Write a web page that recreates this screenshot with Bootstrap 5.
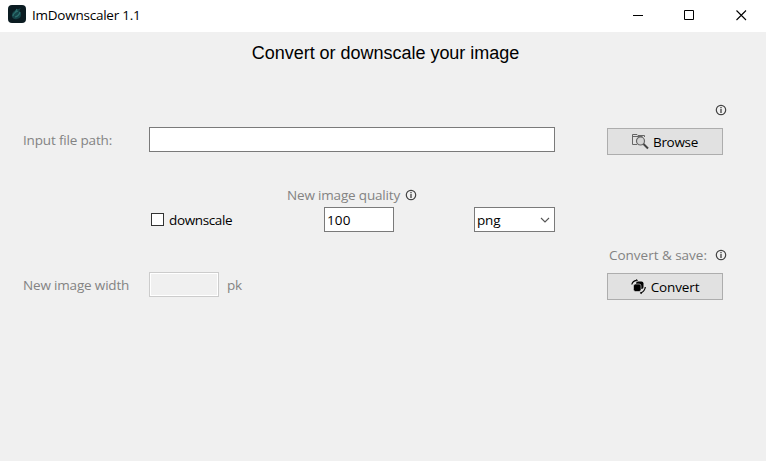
<!DOCTYPE html>
<html lang="en">
<head>
<meta charset="utf-8">
<title>ImDownscaler 1.1</title>
<meta name="viewport" content="width=device-width, initial-scale=1">
<link href="https://cdn.jsdelivr.net/npm/bootstrap@5.3.0/dist/css/bootstrap.min.css" rel="stylesheet">
<style>
body{background:#f0f0f0;color:#000;font:13.5px/20px "Open Sans","Noto Sans",sans-serif;letter-spacing:-.17px;height:461px;overflow:hidden}
.titlebar{height:32px;padding-left:8px}
.app-icon{margin-top:-4px}
.app-name{margin:-2px 0 0 6px;letter-spacing:-.24px}
.win-btn{width:51.5px;height:30px}
.win-group{margin-right:-1px}
.heading{font:18px/22px "Liberation Sans",Arial,sans-serif;letter-spacing:-.02px;margin:10px 0 0 5px}
.form-area{display:grid;grid-template-columns:126px 138px 187px 133px 120px;grid-template-rows:20px 7px 28px 30px 20px 2px 25px 13px 20px 7px 28px;padding:36px 0 0 23px}
.r1{grid-row:1}.r3{grid-row:3}.r5{grid-row:5}.r7{grid-row:7}.r9{grid-row:9}.r11{grid-row:11}
.c1{grid-column:1}.c2{grid-column:2}.c3{grid-column:3}.c4{grid-column:4}.c5{grid-column:5}.c24{grid-column:2/5}
.lbl{color:#838383;white-space:nowrap}
.side-label{height:26px;line-height:26px}
.form-control.box,.form-select.box{height:25px;min-height:0;border:1px solid #7a7a7a;background-color:#fff;padding:0 3px;font:inherit;letter-spacing:inherit;color:#000}
.form-control.path-box{width:406px}
.form-control.quality-box{width:70px;margin-left:37px;padding-left:2px;letter-spacing:.1px}
.form-select.box{width:81px;background-image:none;padding-left:2px}
.form-control.width-box{width:70px;background:#f0f0f0;border-color:#ccc;box-shadow:inset 0 0 0 1px #fff}
.form-check-input.tick{width:13px;height:13px;border:1px solid #333;background:#fff;margin:0 5px 0 2px}
.tick-label{letter-spacing:-.36px}
.btn.act{width:116px;height:27px;border:1px solid #adadad;background:#e1e1e1;padding:0;font:inherit;letter-spacing:-.3px;color:#000;margin-top:1px}
.convert-text{letter-spacing:-.12px}
.chev{position:absolute;right:5px;top:10px;pointer-events:none}
.save-label{margin-left:2px;letter-spacing:-.02px}
.quality-info{margin-left:5px}
</style>
</head>
<body>
<svg class="d-none">
  <symbol id="info" viewBox="0 0 12 12"><circle cx="6" cy="6" r="4.7" fill="none" stroke="#444" stroke-width="1.2"/><path d="M5.4 3h1.200v1.200H5.400zM5.400 5h1.200v4H5.400z" fill="#333"/></symbol>
</svg>
<header class="titlebar bg-white d-flex align-items-center">
  <svg class="app-icon" width="18" height="18" viewBox="0 0 18 18"><rect width="18" height="18" rx="4" fill="#0b1c22"/><path d="M4 12Q3 7 8 5l5-2Q10 6 13 8q1 5-4 6-3 1-5-2z" fill="#164348"/><path d="M5 11q0-3 5-5M7 12q4-1 5-5M9 4L7 8" fill="none" stroke="#2d706f" stroke-width="1.2"/></svg>
  <span class="app-name">ImDownscaler 1.1</span>
  <div class="win-group d-flex ms-auto align-self-start">
    <span class="win-btn d-flex justify-content-center align-items-center"><svg width="11" height="11"><path d="M0 5.5h10" stroke="#000"/></svg></span>
    <span class="win-btn d-flex justify-content-center align-items-center"><svg width="11" height="11"><path d="M.5.5h9v9h-9z" fill="none" stroke="#000"/></svg></span>
    <span class="win-btn d-flex justify-content-center align-items-center"><svg width="11" height="11"><path d="M.5.5l9.500 9.500M10 .5L.5 10" stroke="#000" stroke-width="1.1"/></svg></span>
  </div>
</header>
<main>
  <h1 class="heading text-center">Convert or downscale your image</h1>
  <form class="form-area">
    <div class="r1 c5 d-flex justify-content-end align-items-center"><svg width="12" height="12"><use href="#info"/></svg></div>
    <label class="r3 c1 lbl side-label" for="path">Input file path:</label>
    <div class="r3 c24"><input id="path" class="form-control box path-box rounded-0" type="text"></div>
    <div class="r3 c5"><button type="button" class="btn act rounded-0 d-flex align-items-center justify-content-center">
      <svg width="17" height="17" viewBox="0 0 17 17" class="me-1" fill="none" stroke="#666"><path d="M5 11.500H.5V1.500H5l1 1h6.500V4M.5 3.500h10"/><circle cx="8.500" cy="8" r="4" fill="#d4d4d4" stroke-width="1.200"/><path d="M11.500 11l4.500 4.500" stroke="#444" stroke-width="2"/></svg><span>Browse</span></button></div>
    <div class="r5 c3 lbl d-flex align-items-center"><label for="quality">New image quality</label><svg width="12" height="12" class="quality-info"><use href="#info"/></svg></div>
    <div class="r7 c2 d-flex align-items-center"><input id="down" type="checkbox" class="form-check-input tick rounded-0"><label class="tick-label" for="down">downscale</label></div>
    <div class="r7 c3"><input id="quality" class="form-control box quality-box rounded-0" type="text" value="100"></div>
    <div class="r7 c4"><div class="position-relative d-inline-block"><select class="form-select box rounded-0" aria-label="Format"><option>png</option></select><svg class="chev" width="10" height="7"><path d="M1 1l4 4 4-4" fill="none" stroke="#555" stroke-width="1.100"/></svg></div></div>
    <div class="r9 c5 lbl d-flex align-items-center justify-content-between"><span class="save-label">Convert &amp; save:</span><svg width="12" height="12"><use href="#info"/></svg></div>
    <label class="r11 c1 lbl side-label" for="width">New image width</label>
    <div class="r11 c2 d-flex lbl"><input id="width" class="form-control box width-box rounded-0" type="text" disabled><span class="ms-2 side-label">pk</span></div>
    <div class="r11 c5"><button type="button" class="btn act rounded-0 d-flex align-items-center justify-content-center">
      <svg width="16" height="16" viewBox="0 0 16 16" class="me-1"><rect x="5" y="2.500" width="7.500" height="7.500" rx="2"/><rect x="2.500" y="5" width="7.500" height="7.500" rx="2" stroke="#e1e1e1" stroke-width=".6"/><path d="M.8 5.500Q1.500 2 5.500 1.300M14.300 8q-.5 4.500-4.800 6" fill="none" stroke="#000" stroke-width="1.200"/><path d="M5 0l2 1.300L5.500 2.600zM10.500 12.700L8.800 14l2 1.200z"/></svg><span class="convert-text">Convert</span></button></div>
  </form>
</main>
<script src="https://cdn.jsdelivr.net/npm/bootstrap@5.3.0/dist/js/bootstrap.bundle.min.js"></script>
</body>
</html>
